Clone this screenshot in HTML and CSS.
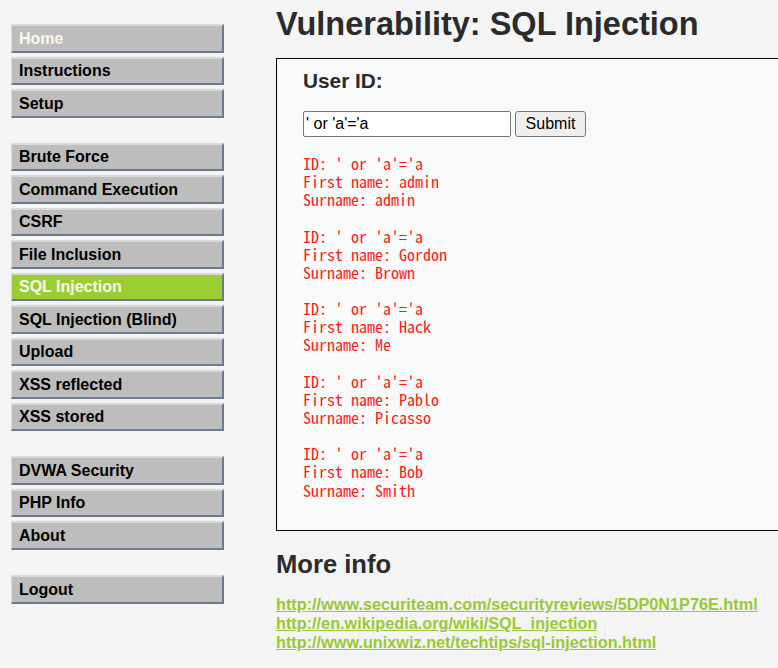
FILE: index.html
```html
<!DOCTYPE html>
<html>
<head>
<meta charset="utf-8">
<title>DVWA - SQL Injection</title>
<link rel="stylesheet" href="styles.css">
</head>
<body>
<div class="page">
  <nav class="menu">
    <ul class="group">
      <li><a class="item home" href="#">Home</a></li>
      <li><a class="item" href="#">Instructions</a></li>
      <li><a class="item" href="#">Setup</a></li>
    </ul>
    <ul class="group">
      <li><a class="item" href="#">Brute Force</a></li>
      <li><a class="item" href="#">Command Execution</a></li>
      <li><a class="item" href="#">CSRF</a></li>
      <li><a class="item" href="#">File Inclusion</a></li>
      <li><a class="item selected" href="#">SQL Injection</a></li>
      <li><a class="item" href="#">SQL Injection (Blind)</a></li>
      <li><a class="item" href="#">Upload</a></li>
      <li><a class="item" href="#">XSS reflected</a></li>
      <li><a class="item" href="#">XSS stored</a></li>
    </ul>
    <ul class="group">
      <li><a class="item" href="#">DVWA Security</a></li>
      <li><a class="item" href="#">PHP Info</a></li>
      <li><a class="item" href="#">About</a></li>
    </ul>
    <ul class="group">
      <li><a class="item" href="#">Logout</a></li>
    </ul>
  </nav>
  <main class="body">
    <h1 class="title">Vulnerability: SQL Injection</h1>
    <div class="vulnerable">
      <h3 class="label">User ID:</h3>
      <form class="form">
        <input class="field" type="text" value="' or 'a'='a">
        <button class="submit" type="button">Submit</button>
      </form>
      <pre class="result">ID: ' or 'a'='a
First name: admin
Surname: admin</pre>
      <pre class="result">ID: ' or 'a'='a
First name: Gordon
Surname: Brown</pre>
      <pre class="result">ID: ' or 'a'='a
First name: Hack
Surname: Me</pre>
      <pre class="result">ID: ' or 'a'='a
First name: Pablo
Surname: Picasso</pre>
      <pre class="result">ID: ' or 'a'='a
First name: Bob
Surname: Smith</pre>
    </div>
    <h2 class="more">More info</h2>
    <ul class="links">
      <li><a href="#">http://www.securiteam.com/securityreviews/5DP0N1P76E.html</a></li>
      <li><a href="#">http://en.wikipedia.org/wiki/SQL_injection</a></li>
      <li><a href="#">http://www.unixwiz.net/techtips/sql-injection.html</a></li>
    </ul>
  </main>
</div>
</body>
</html>
```
FILE: styles.css
```css
html, body {
  margin: 0;
  padding: 0;
  background: #f4f4f4;
  overflow: hidden;
}
body {
  font-family: "Liberation Sans", Arial, sans-serif;
  font-size: 16px;
  color: #000;
}
.page {
  display: flex;
  align-items: flex-start;
}
.menu {
  width: 213px;
  margin: 24px 0 0 11px;
  flex: none;
}
.group {
  list-style: none;
  margin: 0 0 25.2px 0;
  padding: 0;
}
.group li {
  margin-bottom: 4px;
}
.item {
  display: block;
  background: #bdbdbd;
  color: #000;
  text-decoration: none;
  font-weight: bold;
  font-size: 16px;
  line-height: 19px;
  padding: 2.5px 8px 3px 7px;
  border-top: 2px solid #d9d9d9;
  border-left: 1px solid #d9d9d9;
  border-right: 2px solid #6b7a92;
  border-bottom: 2px solid #6b7a92;
}
.item.home {
  color: #fbf7ea;
}
.item.selected {
  background: #9acd32;
  color: #fbf7ea;
}
.body {
  margin-left: 52px;
  flex: none;
  width: 560px;
}
.title {
  font-size: 32.5px;
  line-height: 38px;
  font-weight: bold;
  color: #2b2b2b;
  margin: 5px 0 15px 0;
}
.vulnerable {
  border: 1px solid #000;
  background: #f8f9f9;
  padding: 9px 26px 31px 26px;
}
.label {
  font-size: 20.8px;
  line-height: 25px;
  font-weight: bold;
  color: #2b2b2b;
  margin: 0 0 18px 0;
}
.form {
  display: flex;
  gap: 4px;
  margin: 0 0 17px 0;
}
.field {
  width: 208px;
  height: 26px;
  box-sizing: border-box;
  border: 1px solid #767676;
  border-radius: 2px;
  background: #fff;
  font-family: "Liberation Sans", Arial, sans-serif;
  font-size: 16px;
  padding: 0 2px;
  color: #000;
}
.submit {
  width: 71px;
  height: 26px;
  box-sizing: border-box;
  border: 1px solid #767676;
  border-radius: 3px;
  background: #efefef;
  font-family: "Liberation Sans", Arial, sans-serif;
  font-size: 16px;
  color: #000;
  padding: 0;
}
.result {
  font-family: "Noto Sans Mono CJK JP", "DejaVu Sans Mono", monospace;
  font-size: 16px;
  line-height: 18.13px;
  color: #ff1a1a;
  margin: 0 0 18.2px 0;
}
.result:last-child {
  margin-bottom: 0;
}
.more {
  font-size: 25.6px;
  line-height: 30px;
  font-weight: bold;
  color: #2b2b2b;
  margin: 18px 0 16px 0;
}
.links {
  list-style: none;
  margin: 0;
  padding: 0;
}
.links li {
  line-height: 19px;
}
.links a {
  color: #98c932;
  font-weight: bold;
  font-size: 16.25px;
}
```
